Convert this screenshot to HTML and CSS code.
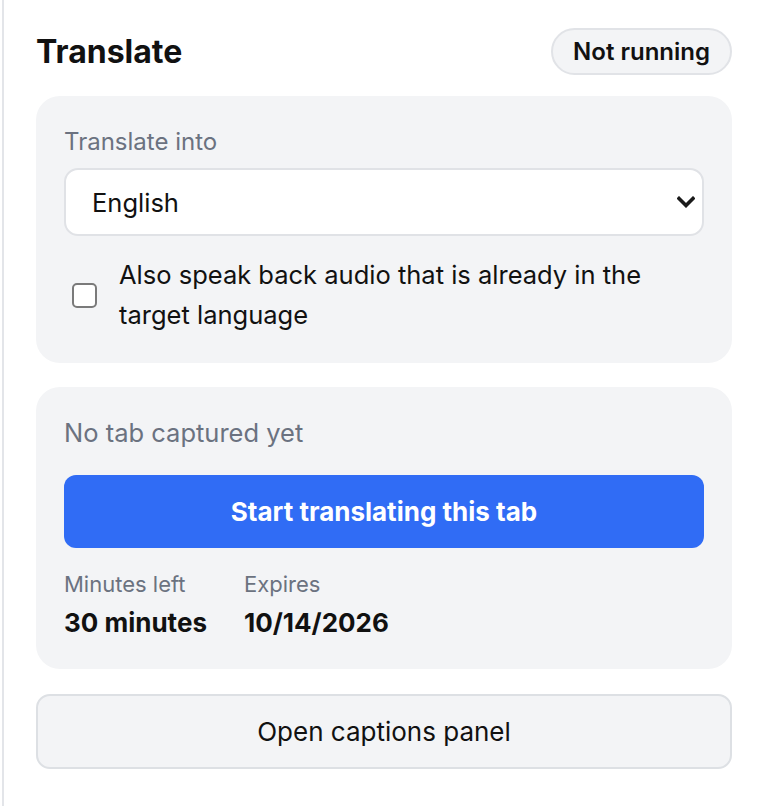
FILE: index.html
```html
<!DOCTYPE html>
<html lang="en">
<head>
<meta charset="utf-8">
<title>Translate</title>
<link rel="stylesheet" href="styles.css">
</head>
<body>
<div class="panel">
  <header class="header">
    <h1 class="title">Translate</h1>
    <span class="pill">Not running</span>
  </header>

  <section class="card card-settings">
    <label class="field-label" for="lang">Translate into</label>
    <div class="select-wrap">
      <select id="lang" class="select">
        <option>English</option>
      </select>
      <svg class="chevron" width="18" height="12" viewBox="0 0 18 12" aria-hidden="true">
        <path d="M2 2.5 L9 9.5 L16 2.5" fill="none" stroke="#1a1a1a" stroke-width="3.6" stroke-linecap="square" stroke-linejoin="miter"/>
      </svg>
    </div>
    <label class="check-row">
      <span class="checkbox"></span>
      <span class="check-text">Also speak back audio that is already in the target language</span>
    </label>
  </section>

  <section class="card card-status">
    <p class="status">No tab captured yet</p>
    <button class="primary">Start translating this tab</button>
    <div class="stats">
      <div class="stat">
        <span class="stat-label">Minutes left</span>
        <span class="stat-value">30 minutes</span>
      </div>
      <div class="stat">
        <span class="stat-label">Expires</span>
        <span class="stat-value">10/14/2026</span>
      </div>
    </div>
  </section>

  <button class="secondary">Open captions panel</button>
</div>
</body>
</html>
```

FILE: styles.css
```css
* { box-sizing: border-box; }

html, body {
  margin: 0;
  padding: 0;
  background: #ffffff;
}

body {
  font-family: Inter, "Noto Sans", "Liberation Sans", sans-serif;
  color: #111827;
}

.panel {
  margin-left: 2px;
  border-left: 2px solid #e3e5e9;
  min-height: 806px;
  padding: 28px 32px 0 32px;
}

.header {
  display: flex;
  align-items: center;
  justify-content: space-between;
  height: 47px;
  margin-bottom: 21px;
}

.title {
  margin: 0;
  font-size: 32px;
  font-weight: 700;
  color: #111111;
}

.pill {
  display: inline-flex;
  align-items: center;
  height: 47px;
  padding: 0 20px;
  border: 2px solid #e1e3e7;
  border-radius: 24px;
  background: #f3f4f6;
  font-size: 24px;
  font-weight: 600;
  color: #111111;
}

.card {
  background: #f3f4f6;
  border-radius: 24px;
  padding: 28px;
}

.card-settings {
  margin-bottom: 24px;
}

.field-label {
  display: block;
  font-size: 24px;
  line-height: 32px;
  color: #6b7280;
  padding-top: 2px;
  margin-bottom: 10px;
}

.select-wrap {
  position: relative;
}

.select {
  display: block;
  width: 100%;
  height: 68px;
  appearance: none;
  -webkit-appearance: none;
  border: 2px solid #e0e2e6;
  border-radius: 14px;
  background: #ffffff;
  padding: 0 48px 0 26px;
  font-family: inherit;
  font-size: 25.5px;
  color: #111111;
}

.chevron {
  position: absolute;
  right: 9px;
  top: 28px;
  pointer-events: none;
}

.check-row {
  display: flex;
  align-items: center;
  gap: 22px;
  margin-top: 19px;
  padding-left: 8px;
}

.checkbox {
  flex: none;
  width: 25px;
  height: 25px;
  border: 2px solid #7a7a7a;
  border-radius: 5px;
  background: #ffffff;
}

.check-text {
  font-size: 25.5px;
  line-height: 40px;
  color: #111111;
}

.card-status {
  margin-bottom: 25px;
}

.status {
  margin: 2px 0 26px 0;
  font-size: 25.5px;
  line-height: 32px;
  color: #6b7280;
}

.primary {
  display: block;
  width: 100%;
  height: 73px;
  border: none;
  border-radius: 12px;
  background: #306cf5;
  color: #ffffff;
  font-family: inherit;
  font-size: 26px;
  font-weight: 700;
}

.stats {
  display: flex;
  gap: 37px;
  margin-top: 21px;
}

.stat {
  display: flex;
  flex-direction: column;
  gap: 6px;
}

.stat-label {
  font-size: 22px;
  line-height: 30px;
  color: #6b7280;
}

.stat-value {
  font-size: 26px;
  line-height: 36px;
  font-weight: 700;
  color: #111111;
}

.secondary {
  display: block;
  width: 100%;
  height: 75px;
  border: 2px solid #dde0e4;
  border-radius: 14px;
  background: #f3f4f6;
  font-family: inherit;
  font-size: 26px;
  color: #111111;
}
```
